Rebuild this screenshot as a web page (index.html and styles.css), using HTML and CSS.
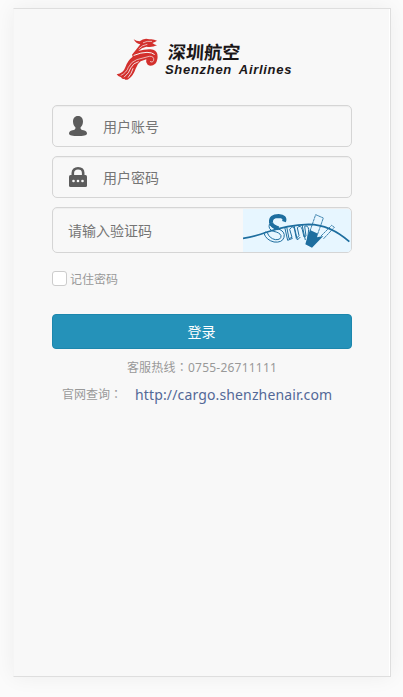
FILE: index.html
```
<!DOCTYPE html>
<html lang="zh-CN">
<head>
<meta charset="utf-8">
<title>深圳航空</title>
<link rel="stylesheet" href="styles.css">
</head>
<body>
<main class="panel">
  <header class="logo">
    <svg class="bird" viewBox="0 0 144 144" aria-hidden="true">
      <path fill="#d3302d" d="M59 10Q67 16 77 16Q90 5 106 10Q118 8 129 14Q123 18 115 21Q122 27 129 28Q113 36 97 32Q83 35 73 45Q93 39 110 40Q127 42 130 54Q133 72 124 83Q112 93 101 86Q94 79 97 70L80 76Q70 83 65 98Q58 119 43 130Q34 134 31 128Q25 131 21 124Q13 123 8 115Q28 112 34 94Q40 74 56 62L54 56Q66 42 79 25Q66 23 59 10Z"/>
      <g fill="none" stroke="#f8f8f8" stroke-linecap="round" stroke-linejoin="round" stroke-width="2">
        <path d="M88 20Q99 14 113 16M75 38Q84 27 99 25"/>
        <path stroke-width="3" d="M60 58Q82 49 99 49Q114 49 121 55"/>
        <path d="M21 118Q38 110 43 94Q51 77 68 71L106 61Q121 60 119 73Q116 82 109 77"/>
        <path stroke-width="2.500" d="M31 123Q46 111 50 96Q57 81 73 77M43 124Q53 112 57 98"/>
      </g>
    </svg>
    <div class="names">
      <div class="name-zh">深圳航空</div>
      <div class="name-en">Shenzhen Airlines</div>
    </div>
  </header>
  <form class="form">
    <div class="field">
      <svg class="icon" viewBox="0 0 18 20"><path fill="#5c5c5c" d="M9 0C5.500 0 4 2.500 4 5.500C4 8 5 10 6.500 11.500C6.500 13.500 5.500 13.700 3.500 14.300C1 15 0 16 0 17.500C0 19.500 4 20 9 20S18 19.500 18 17.500C18 16 17 15 14.500 14.300C12.500 13.700 11.500 13.500 11.500 11.500C13 10 14 8 14 5.500C14 2.500 12.500 0 9 0Z"/></svg>
      <span>用户账号</span>
    </div>
    <div class="field">
      <svg class="icon" viewBox="0 0 18 20"><path fill="none" stroke="#5c5c5c" stroke-width="2.600" d="M3.800 9V6C3.800 3 6 1.300 9 1.300S14.200 3 14.200 6V9"/><rect y="8" width="18" height="12" rx="1.500" fill="#5c5c5c"/><g fill="#f8f8f8"><circle cx="4.500" cy="14" r="1.300"/><circle cx="9" cy="14" r="1.300"/><circle cx="13.500" cy="14" r="1.300"/></g></svg>
      <span>用户密码</span>
    </div>
    <div class="field captcha">
      <span>请输入验证码</span>
      <svg class="code" viewBox="24 24 324 129" preserveAspectRatio="none">
        <rect x="24" y="24" width="324" height="129" fill="#e7f6ff"/>
        <g fill="none" stroke="#1e6e9f">
          <path stroke-width="12" d="M147 62Q153 46 131 45Q106 45 108 64Q110 77 131 82"/>
          <path stroke-width="3" d="M103 70Q112 81 128 83Q152 91 147 109Q142 126 117 123Q93 117 87 97Q89 90 97 95Q103 112 121 116Q139 117 138 104Q134 94 115 91Q99 85 103 70"/>
          <path stroke-width="3" d="M155 77L162 113L171 109L164 85Q176 69 179 87L184 112L192 104L187 80Q197 70 202 86L207 108L213 105L209 76Q218 71 221 85L218 114M149 78L158 118L173 112M177 73L187 117L196 108M201 71L211 117"/>
          <path stroke-width="2.500" stroke-dasharray="9 1" d="M225 90L242 41L265 51L248 99M258 105L290 73L298 79L265 114"/>
          <path stroke-width="5" d="M24 112Q66 105 94 94Q157 72 221 70Q286 71 343 122"/>
        </g>
        <path fill="#1e6e9f" d="M225 87L249 98L246 109L265 105L231 140L211 130L219 101Z"/>
      </svg>
    </div>
    <label class="remember"><span class="box"></span><span>记住密码</span></label>
    <button class="login" type="button">登录</button>
  </form>
  <p class="hotline">客服热线<span class="colon" lang="zh-TW">：</span>0755-26711111</p>
  <p class="site"><span>官网查询<span class="colon" lang="zh-TW">：</span></span><a>http://cargo.shenzhenair.com</a></p>
</main>
</body>
</html>
```
FILE: styles.css
```
* { box-sizing: border-box; }
body {
  margin: 0;
  padding: 8px 12px 20px 13px;
  background: #fbfbfb;
  font-family: "Noto Sans", "Noto Sans CJK SC", sans-serif;
}
.panel {
  height: 669px;
  padding: 27px 38px 0;
  background: #f8f8f8;
  border: 1px solid #dedede;
  border-left-color: #f5f5f5;
  box-shadow: 0 0 20px rgba(0, 0, 0, .06), inset -1px 0 #fff;
}
.logo {
  display: flex;
  height: 48px;
  padding-left: 62px;
}
.bird { width: 48px; height: 48px; flex: none; }
.names { margin: 4px 0 0 3px; color: #1b1718; white-space: nowrap; }
.name-zh {
  padding-left: 3px;
  font: 700 18px/23px "Noto Sans CJK SC", sans-serif;
  letter-spacing: .1px;
  transform: skewX(-4deg);
}
.name-en {
  font: italic 700 13px/13px "Liberation Sans", sans-serif;
  letter-spacing: .7px;
  word-spacing: 3px;
}
.form { margin-top: 21px; }
.field {
  display: flex;
  align-items: center;
  height: 42px;
  margin-bottom: 9px;
  padding-left: 16px;
  border: 1px solid #d5d5d5;
  border-radius: 5px;
  box-shadow: inset 0 1px 1px rgba(0, 0, 0, .04);
  color: #757575;
  font-size: 14px;
  line-height: 20px;
}
.field span { padding-top: 2px; }
.icon { width: 18px; height: 20px; margin-right: 16px; }
.captcha { height: 46px; padding-left: 15px; }
.code {
  width: 108px;
  height: 43px;
  margin-left: auto;
  border-radius: 0 4px 4px 0;
}
.remember {
  display: flex;
  align-items: center;
  gap: 3px;
  height: 15px;
  margin-top: 18px;
  color: #999;
  font-size: 12px;
}
.box {
  width: 15px;
  height: 15px;
  background: #fff;
  border: 1px solid #ccc;
  border-radius: 3px;
}
.login {
  display: block;
  width: 100%;
  height: 35px;
  margin-top: 28px;
  padding: 0 1px 2px 0;
  background: #2592b9;
  border: 1px solid #1c87ad;
  border-radius: 4px;
  color: #fff;
  font: 14px/20px "Noto Sans CJK SC", sans-serif;
}
.hotline {
  height: 18px;
  margin: 10px 0 0;
  color: #999;
  font-size: 12px;
  line-height: 18px;
  letter-spacing: .22px;
  text-align: center;
}
.colon { font-family: "Noto Sans CJK TC", sans-serif; line-height: 1; }
.site {
  display: flex;
  align-items: center;
  height: 20px;
  margin: 8px 0 0 10px;
  color: #999;
  font-size: 12px;
  line-height: 20px;
  white-space: nowrap;
}
.site a {
  margin-left: 13px;
  color: #536897;
  font-size: 14px;
  letter-spacing: .14px;
}
```
